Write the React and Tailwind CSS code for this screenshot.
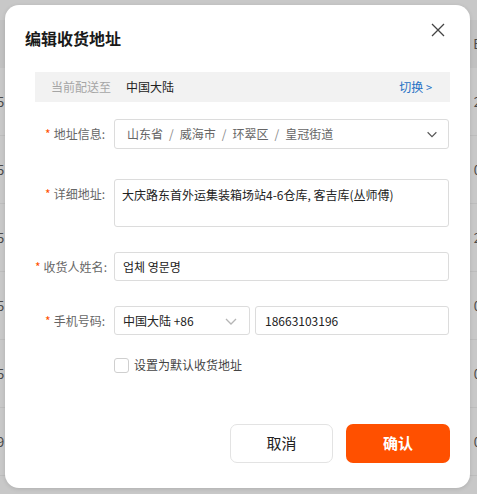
import React, { useState } from 'react';

const font = { fontFamily: '"Noto Sans CJK SC", "Noto Sans", sans-serif' };

function Chevron({ className }) {
  return (
    <svg viewBox="0 0 16 16" className={className} fill="none" stroke="currentColor" strokeWidth="1.3">
      <path d="M3 6l5 5 5-5" />
    </svg>
  );
}

function FormRow({ label, children, className = '' }) {
  return (
    <div className={`flex items-start ${className}`}>
      <div className="w-[70px] h-[30px] leading-[30px] text-right text-[12px] text-[#666] whitespace-nowrap shrink-0">
        <span className="text-[#ff5000] mr-[3px]">*</span>
        {label}:
      </div>
      <div className="ml-[9px] w-[335px]">{children}</div>
    </div>
  );
}

export default function App() {
  const [isDefault, setIsDefault] = useState(false);
  const left = ['5', '5', '5', '5', '5', '9'];
  const right = ['2', '0', '2', '0', '0', '0'];

  return (
    <div className="relative w-[477px] h-[494px] overflow-hidden bg-[#c8c8c8]" style={font}>
      {/* table behind the overlay */}
      <div className="pt-[20px] text-[13px] text-[#4a4a4a]">
        <div className="h-[48px] bg-[#c1c1c1] flex items-center justify-end">
          <span className="-mr-[4px]">E</span>
        </div>
        {left.map((l, i) => (
          <div key={i} className="h-[68px] border-b border-[#bdbdbd] flex items-center justify-between">
            <span className="-ml-[3px]">{l}</span>
            <span className="-mr-[4px]">{right[i]}</span>
          </div>
        ))}
      </div>

      {/* modal */}
      <div className="absolute left-[5px] top-[5px] w-[465px] h-[483px] bg-white rounded-[14px] shadow-[0_1px_4px_rgba(0,0,0,0.12)]">
        <div className="relative pt-[21px] pl-[20px]">
          <h2 className="text-[16px] leading-[24px] font-bold text-[#1a1a1a]">编辑收货地址</h2>
          <button className="absolute right-[25px] top-[18px] w-[14px] h-[14px] text-[#444]">
            <svg viewBox="0 0 14 14" className="w-[14px] h-[14px]" stroke="currentColor" strokeWidth="1.3">
              <path d="M1 1l12 12M13 1L1 13" />
            </svg>
          </button>
        </div>

        <div className="ml-[30px] mr-[20px] mt-[22px] h-[30px] bg-[#f2f2f2] flex items-center px-[16px] text-[12px]">
          <span className="text-[#a5a5a5]">当前配送至</span>
          <span className="ml-[15px] text-[#222]">中国大陆</span>
          <span className="ml-auto mr-[2px] text-[#2470c4]">切换 <span className="text-[11px]">&gt;</span></span>
        </div>

        <div className="pl-[30px]">
          <FormRow label="地址信息" className="mt-[17px]">
            <div className="h-[30px] border border-[#dcdcdc] rounded-[3px] flex items-center pl-[12px] pr-[9px] text-[12px] text-[#666]">
              <span>山东省</span>
              <span className="mx-[6px] text-[#888]">/</span>
              <span>威海市</span>
              <span className="mx-[6px] text-[#888]">/</span>
              <span>环翠区</span>
              <span className="mx-[6px] text-[#888]">/</span>
              <span>皇冠街道</span>
              <Chevron className="ml-auto w-[14px] h-[14px] text-[#555]" />
            </div>
          </FormRow>

          <FormRow label="详细地址" className="mt-[30px]">
            <div className="h-[48px] border border-[#dcdcdc] rounded-[3px] px-[7px] pt-[6px] text-[12px] leading-[18px] text-[#222]">
              大庆路东首外运集装箱场站4-6仓库, 客吉库(丛师傅)
            </div>
          </FormRow>

          <FormRow label="收货人姓名" className="mt-[25px]">
            <div className="h-[29px] border border-[#dcdcdc] rounded-[3px] flex items-center px-[8px] text-[12px] text-[#222]">
              업체 영문명
            </div>
          </FormRow>

          <FormRow label="手机号码" className="mt-[24px]">
            <div className="flex gap-[5px]">
              <div className="w-[136px] h-[29px] border border-[#dcdcdc] rounded-[3px] flex items-center pl-[8px] pr-[10px] text-[12px] text-[#222]">
                中国大陆 +86
                <Chevron className="ml-auto w-[16px] h-[16px] text-[#b5b5b5]" />
              </div>
              <div className="flex-1 h-[29px] border border-[#dcdcdc] rounded-[3px] flex items-center px-[9px] text-[12px] text-[#222]">
                18663103196
              </div>
            </div>
          </FormRow>

          <label className="ml-[79px] mt-[20px] flex items-center gap-[5px] text-[12px] text-[#444] cursor-pointer w-fit">
            <input
              type="checkbox"
              checked={isDefault}
              onChange={(e) => setIsDefault(e.target.checked)}
              className="appearance-none w-[15px] h-[15px] border border-[#cfcfcf] rounded-[3px] bg-white"
            />
            设置为默认收货地址
          </label>
        </div>

        <div className="flex justify-end gap-[13px] mr-[20px] mt-[50px]">
          <button className="w-[103px] h-[39px] border border-[#e3e3e3] rounded-[7px] bg-white text-[15px] text-[#222]">
            取消
          </button>
          <button className="w-[104px] h-[39px] rounded-[7px] bg-[#ff5000] text-[15px] font-bold text-white">
            确认
          </button>
        </div>
      </div>
    </div>
  );
}
